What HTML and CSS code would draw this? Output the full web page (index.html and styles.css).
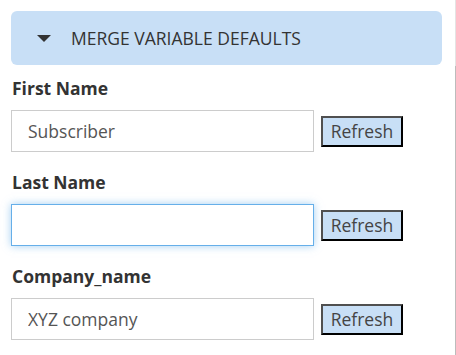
FILE: index.html
```html
<!DOCTYPE html>
<html>
<head>
<meta charset='UTF-8'>
<meta name='viewport' content='width=device-width, initial-scale=1.0'>
<link rel="stylesheet" href="styles.css">
</head>
<body>

<div class="page">

<div class="panel-head">
<span class="caret"></span>
<span class="panel-title">Merge Variable Defaults</span>
</div>

<div class="field">
<label for="first_name">First Name</label>
<div class="row">
<input type="text" id="first_name" value="Subscriber">
<button>Refresh</button>
</div>
</div>

<div class="field">
<label for="last_name">Last Name</label>
<div class="row">
<input type="text" id="last_name" class="focused" value="">
<button>Refresh</button>
</div>
</div>

<div class="field">
<label for="company_name">Company_name</label>
<div class="row">
<input type="text" id="company_name" value="XYZ company">
<button>Refresh</button>
</div>
</div>

</div>

</body>
</html>
```

FILE: styles.css
```css
body {
    font-family: "Open Sans", "Liberation Sans", sans-serif;
    color: #333;
    background: white;
    padding: 0;
    margin: 0;
}

.page {
    height: 355px;
    padding: 11px 0 0 11px;
    box-sizing: border-box;
    background:
        linear-gradient(#e4e4e4, #e4e4e4) right top / 1px 66px no-repeat,
        linear-gradient(#bcbcbc, #bcbcbc) right 66px / 1px 100% no-repeat;
}

.panel-head {
    display: flex;
    align-items: center;
    width: 431px;
    height: 54px;
    padding-left: 26px;
    box-sizing: border-box;
    background: #c8dff6;
    border-radius: 6px;
}

.caret {
    width: 0;
    height: 0;
    border-left: 7px solid transparent;
    border-right: 7px solid transparent;
    border-top: 7px solid #333;
    margin-right: 20px;
}

.panel-title {
    font-size: 17.5px;
    text-transform: uppercase;
    color: #333;
}

.field {
    margin-top: 11px;
}

.field + .field {
    margin-top: 18px;
}

.field label {
    display: block;
    font-size: 17.5px;
    font-weight: bold;
    line-height: 24px;
    margin-left: 1px;
}

.row {
    display: flex;
    align-items: center;
    margin-top: 10px;
}

.row input {
    width: 303px;
    height: 42px;
    box-sizing: border-box;
    border: 1px solid #ccc;
    padding: 0 16px;
    font-family: "Open Sans", "Liberation Sans", sans-serif;
    font-size: 17.5px;
    color: #555;
    outline: none;
    margin: 0;
}

.row input.focused {
    border-color: #66afe9;
    box-shadow: 0 0 8px rgba(102, 175, 233, 0.6);
}

.row button {
    margin-left: 7px;
    height: 31px;
    width: 82px;
    box-sizing: border-box;
    padding: 0;
    background: #c8dff6;
    border: 2px solid;
    border-color: #505050 #000 #000 #505050;
    font-family: "Open Sans", "Liberation Sans", sans-serif;
    font-size: 17.5px;
    line-height: 25px;
    color: #444;
}
```
